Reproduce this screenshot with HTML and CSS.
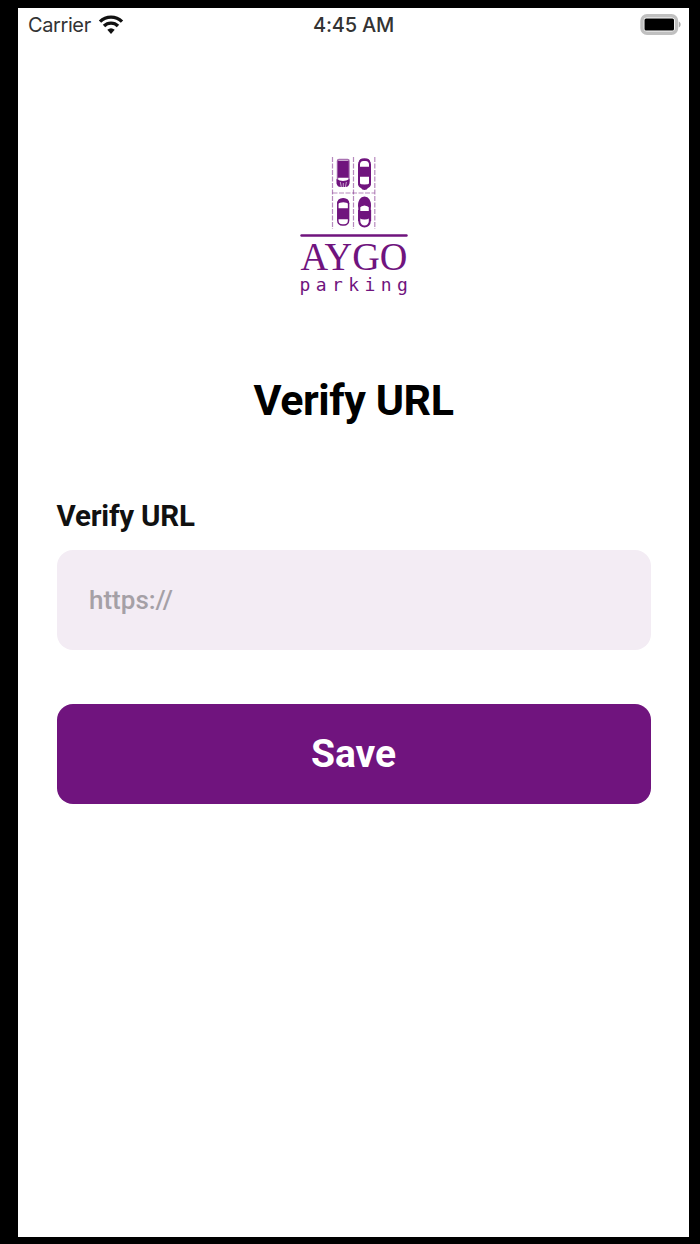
FILE: index.html
```html
<!DOCTYPE html>
<html lang="en">
<head>
  <meta charset="UTF-8" />
  <title>AYGO parking</title>
  <link rel="stylesheet" href="styles.css">
</head>
<body>
  <div class="screen">
    <header class="status-bar">
      <div class="carrier">
        <span>Carrier</span>
        <svg class="wifi" width="26" height="20" viewBox="0 0 26 20">
          <path d="M2 6.6a15.8 15.8 0 0 1 22 0" />
          <path d="M6 11a10 10 0 0 1 14 0" />
          <path class="dot" d="M13 19l-3.7-4.2a5.6 5.6 0 0 1 7.4 0z" />
        </svg>
      </div>
      <div class="time">4:45 AM</div>
      <svg class="battery" width="42" height="22" viewBox="0 0 42 22">
        <rect x="2" y="1.7" width="34.5" height="17.6" rx="5" fill="#fff" stroke="#c0c0c0" stroke-width="3.4" />
        <rect x="4.5" y="4.5" width="29.5" height="12" rx="1.5" fill="#000" />
        <path d="M38.8 7.5c2.4 1 2.4 5 0 6z" fill="#aaa" />
      </svg>
    </header>

    <main>
      <svg class="logo" width="120" height="150" viewBox="0 0 120 150">
        <!-- parking lines -->
        <g class="lines">
          <path d="M38.5 7v72" />
          <path d="M59.5 7v72" />
          <path d="M80.8 7v72" />
          <path d="M38.5 43h42" />
        </g>
        <!-- top left -->
        <g class="car">
          <rect x="43.5" y="9.5" width="11.5" height="23" rx="1.5" stroke-opacity="0.6" />
          <rect x="44.5" y="11.5" width="9.5" height="15.5" fill="#70147e" />
          <path class="solid" d="M42.5 29q6.5 4 13 0v4.5q-1 3.5-4 3.5h-5q-3 0-4-3.5z" />
          <path class="gap" d="M46.3 32l1 5M49.3 33v4M52.4 32l-1 5" />
        </g>
        <!-- top right -->
        <g class="car">
          <rect x="65" y="10" width="11" height="27" rx="4.5" stroke-width="2" />
          <path d="M65.5 12.5q0-3.5 5-3.5t5 3.5" />
          <rect x="65.5" y="17.5" width="10" height="8.5" fill="#70147e" />
          <path class="solid" d="M64 33q6.5 3 13 0 0 4-3 5-1 2-3.5 2t-3.5-2q-3-1-3-5z" />
        </g>
        <!-- bottom left -->
        <g class="car">
          <rect x="43.8" y="49.5" width="10.8" height="25.5" rx="4.5" />
          <path class="solid" d="M43 54q0-6 6.2-6t6.2 6q-6-3.5-12.4 0z" />
          <rect x="44.5" y="59" width="9.5" height="9.5" fill="#70147e" />
        </g>
        <!-- bottom right -->
        <g class="car">
          <rect x="65.3" y="50" width="10.5" height="26.5" rx="5.2" stroke-width="2" />
          <path class="solid" d="M64 56q0-9 6.5-9.5 6.5 0.5 6.5 9.5l-1 2q-5.5-5-11 0z" />
          <path class="solid" d="M66 61h9l1 7q-5.500 3-11 0z" />
          <path d="M64.8 60v11M76.4 60v11" />
        </g>
        <path class="rule" d="M7.5 85.5h105" />
        <text class="name" x="6.5" y="120" textLength="107" lengthAdjust="spacingAndGlyphs">AYGO</text>
        <text class="sub" x="5.5" y="140.7">parking</text>
      </svg>

      <h1>Verify URL</h1>

      <form>
        <label for="url">Verify URL</label>
        <input id="url" type="text" placeholder="https://" />
        <button type="button">Save</button>
      </form>
    </main>
  </div>
</body>
</html>
```

FILE: styles.css
```css
* {
  box-sizing: border-box;
}
html, body {
  margin: 0;
  height: 100%;
}
body {
  background: #000;
  padding: 7.5px 11px 7.5px 18px;
  font-family: Roboto, sans-serif;
}
.screen {
  height: 100%;
  background: #fff;
}
.status-bar {
  display: grid;
  grid-template-columns: 1fr auto 1fr;
  align-items: center;
  height: 34px;
  padding: 0 7px 0 10px;
  font-family: Inter, sans-serif;
  font-size: 20px;
  color: #333;
}
.carrier {
  display: flex;
  align-items: center;
  gap: 7px;
  letter-spacing: -0.4px;
}
.wifi {
  fill: none;
  stroke: #111;
  stroke-width: 3.4;
}
.wifi .dot {
  fill: #111;
  stroke: none;
}
.time {
  padding-right: 3px;
  font-weight: 500;
  letter-spacing: -0.2px;
}
.battery {
  justify-self: end;
}
main {
  display: flex;
  flex-direction: column;
  align-items: center;
  padding: 108.5px 38.5px 0;
}
.logo {
  display: block;
}
.logo .lines path {
  stroke: #70147e;
  stroke-opacity: 0.5;
  stroke-width: 1.2;
  stroke-dasharray: 5 1.5;
}
.logo .car {
  fill: none;
  stroke: #70147e;
  stroke-width: 1.5;
}
.logo .car .solid {
  fill: #70147e;
  stroke: none;
}
.logo .car .gap {
  stroke: #fff;
  stroke-width: 0.6;
}
.logo .rule {
  stroke: #70147e;
  stroke-width: 2.4;
  stroke-linecap: round;
}
.logo text {
  fill: #70147e;
}
.logo .name {
  font-family: "Liberation Serif", serif;
  font-size: 40px;
}
.logo .sub {
  font-family: "DejaVu Sans Mono", monospace;
  font-size: 18px;
  letter-spacing: 5.4px;
}
h1 {
  margin: 74px 0 0;
  font-size: 43px;
  line-height: 52px;
  font-weight: 700;
  letter-spacing: -0.45px;
  color: #000;
}
form {
  display: flex;
  flex-direction: column;
  width: 100%;
  margin-top: 72px;
}
label {
  font-size: 29.5px;
  line-height: 36px;
  font-weight: 700;
  letter-spacing: -0.2px;
  color: #111;
}
input {
  height: 100px;
  margin-top: 16px;
  padding: 0 32.5px;
  border: none;
  border-radius: 16px;
  background: #f3ecf4;
  font-family: Roboto, sans-serif;
  font-size: 26px;
}
input::placeholder {
  color: #a5a0a6;
  font-weight: 500;
}
button {
  height: 100px;
  margin-top: 54px;
  border: none;
  border-radius: 16px;
  background: #70147e;
  color: #fff;
  font-family: Roboto, sans-serif;
  font-size: 39px;
  font-weight: 700;
}
```
